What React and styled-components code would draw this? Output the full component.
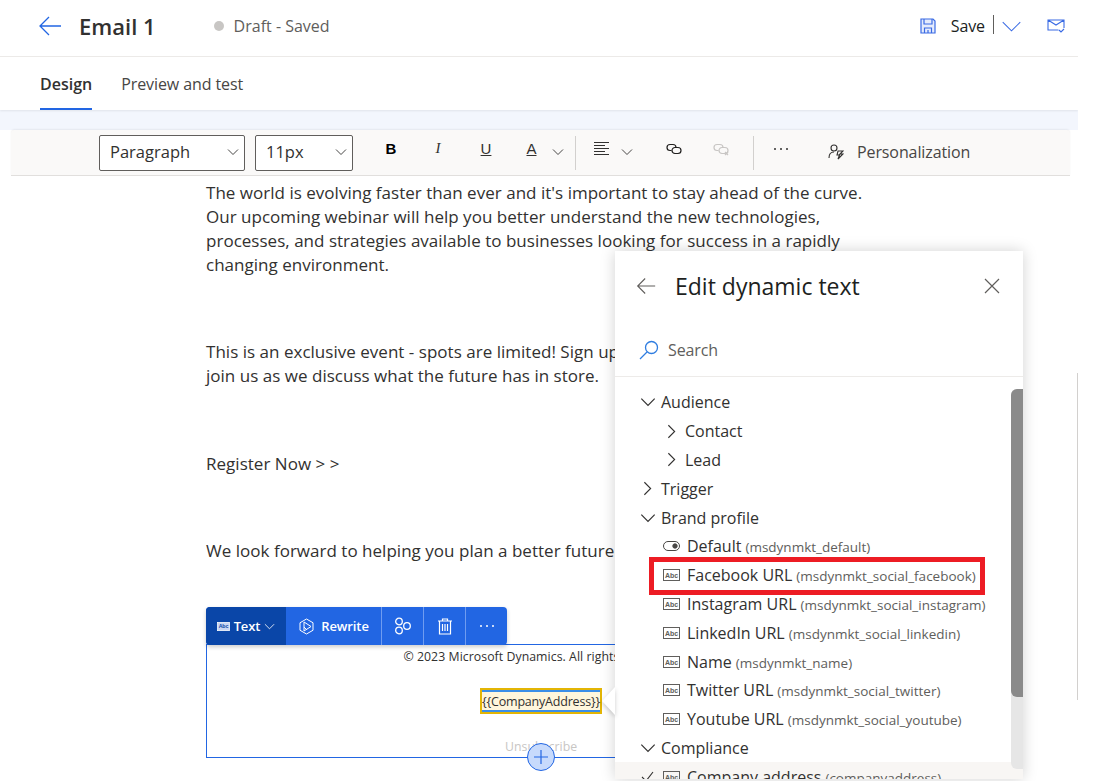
import styled, { createGlobalStyle } from 'styled-components'

const GlobalStyle = createGlobalStyle`
  html, body {
    margin: 0;
    height: 100%;
    overflow: hidden;
    background: #fff;
  }
  * {
    box-sizing: border-box;
  }
  #root {
    font-family: "Open Sans", "Noto Sans", "Liberation Sans", sans-serif;
    color: #323130;
  }
`

const Page = styled.div`
  width: 1078px;
  height: 781px;
  display: flex;
  flex-direction: column;
  position: relative;
  overflow: hidden;
`

const Header = styled.header`
  height: 57px;
  flex: none;
  display: flex;
  align-items: center;
  padding: 0 13px 4px 38px;
  border-bottom: 1px solid #edebe9;
`

const Title = styled.h1`
  margin: 0 0 0 17px;
  font-size: 22px;
  font-weight: 600;
  color: #323130;
`

const Status = styled.div`
  display: flex;
  align-items: center;
  margin-left: 58px;
  font-size: 16px;
  color: #605e5c;

  &::before {
    content: '';
    width: 10px;
    height: 10px;
    border-radius: 50%;
    background: #c8c6c4;
    margin-right: 10px;
  }
`

const HeaderActions = styled.div`
  margin-left: auto;
  display: flex;
  align-items: center;
`

const SaveLabel = styled.span`
  font-size: 16px;
  letter-spacing: -0.1px;
  color: #201f1e;
  margin-left: 15px;
  padding-right: 8px;
`

const Divider = styled.span`
  width: 1px;
  height: 19px;
  background: #605e5c;
  margin: 0 7px 4px 0;
`

const HeaderSpacer = styled.span`
  width: 25px;
`

const Tabs = styled.nav`
  height: 53px;
  flex: none;
  display: flex;
  gap: 29px;
  padding-left: 40px;
  box-shadow: 0 1px 2px rgba(0, 0, 0, 0.08);
  position: relative;
`

const Tab = styled.div`
  font-size: 16px;
  letter-spacing: ${({ $active }) => ($active ? '0' : '-0.1px')};
  line-height: 55px;
  height: 53px;
  color: ${({ $active }) => ($active ? '#323130' : '#484644')};
  font-weight: ${({ $active }) => ($active ? 600 : 400)};
  border-bottom: 2px solid ${({ $active }) => ($active ? '#2266e3' : 'transparent')};
`

const Canvas = styled.main`
  flex: 1;
  min-height: 0;
  background: linear-gradient(#f3f6fd 0, #f3f6fd 20px, #fff 20px);
  padding: 20px 8px 0 11px;
  display: flex;
  flex-direction: column;
`

const Editor = styled.div`
  flex: 1;
  background: #fff;
  display: flex;
  flex-direction: column;
`

const Toolbar = styled.div`
  height: 46px;
  flex: none;
  display: flex;
  align-items: center;
  background: #faf9f8;
  border-bottom: 1px solid #e1dfdd;
  border-radius: 4px 4px 0 0;
  box-shadow: 0 -1px 2px rgba(0, 0, 0, 0.06);
  padding-left: 88px;
`

const SelectBox = styled.div`
  width: ${({ $width }) => $width}px;
  height: 36px;
  margin-right: 10px;
  display: flex;
  align-items: center;
  justify-content: space-between;
  padding: 0 5px 2px 10px;
  background: #fff;
  border: 1px solid #605e5c;
  border-radius: 2px;
  font-size: 16.5px;
  color: #323130;
`

const ToolButton = styled.div`
  width: ${({ $width }) => $width || 47}px;
  height: 36px;
  display: flex;
  align-items: center;
  justify-content: center;
  gap: ${({ $gap }) => $gap || 0}px;
  padding-bottom: 8px;
  flex: none;
  color: ${({ $muted }) => ($muted ? '#c8c6c4' : '#323130')};
`

const ToolChevron = styled.span`
  display: flex;
  margin-top: 7px;
`

const Glyph = styled.span`
  font-size: 15px;
  font-weight: ${({ $bold }) => ($bold ? 700 : 400)};
  font-style: ${({ $italic }) => ($italic ? 'italic' : 'normal')};
  text-decoration: ${({ $under }) => ($under ? 'underline' : 'none')};
  font-family: ${({ $serif }) => ($serif ? '"Liberation Serif", serif' : '"Liberation Sans", sans-serif')};
  color: ${({ $bold }) => ($bold ? '#000' : '#323130')};
`

const ToolDivider = styled.span`
  width: 1px;
  height: 34px;
  background: #d2d0ce;
  flex: none;
  margin-left: ${({ $left }) => $left || 0}px;
`

const Personalize = styled.div`
  display: flex;
  align-items: center;
  gap: 13px;
  margin-left: 20px;
  padding-bottom: 2px;
  font-size: 16px;
  letter-spacing: -0.1px;
  color: #484644;
`

const Body = styled.div`
  flex: 1;
  width: 660px;
  margin-left: 195px;
  padding-top: 5px;
  font-size: 17px;
  line-height: 24px;
  letter-spacing: 0.02px;
  color: #323130;
`

const Para = styled.p`
  margin: 0 0 ${({ $after }) => $after}px;
`

const Block = styled.div`
  position: relative;
  width: 660px;
  height: 114px;
  margin-top: 81px;
  border: 1px solid #2266e3;
  padding: 3px 0 0 8px;
  font-size: 12.3px;
  line-height: 18px;
  text-align: center;
  letter-spacing: 0.05px;
`

const BlockBar = styled.div`
  position: absolute;
  left: -1px;
  top: -38px;
  height: 38px;
  display: flex;
  background: #2266e3;
  border-radius: 4px;
  box-shadow: 0 2px 4px rgba(0, 0, 0, 0.2);
  color: #fff;
  font-size: 13px;
  letter-spacing: -0.1px;
`

const BarItem = styled.div`
  display: flex;
  align-items: center;
  justify-content: center;
  gap: ${({ $gap }) => $gap || 0}px;
  width: ${({ $width }) => $width}px;
  background: ${({ $dark }) => ($dark ? '#0a46a8' : 'transparent')};
  border-left: ${({ $line }) => ($line ? '1px solid #6f9cf0' : 'none')};
  border-radius: ${({ $dark }) => ($dark ? '4px 0 0 4px' : '0')};
  font-weight: 600;
`

const DynamicToken = styled.div`
  position: absolute;
  left: 273px;
  top: 43px;
  width: 122px;
  height: 26px;
  background: #fff6dc;
  border: 1px solid #e3b505;
  box-shadow: inset 0 0 0 1px #e3b505, inset 0 3px 0 #3b8ee8, inset 0 -3px 0 #3b8ee8;
  font-size: 12.5px;
  line-height: 26px;
  letter-spacing: -0.2px;
  white-space: nowrap;
  text-align: center;
  color: #323130;
`

const Unsubscribe = styled.div`
  position: absolute;
  left: 298px;
  top: 93px;
  color: #c8c6c4;
  font-size: 12.3px;
`

const AddButton = styled.div`
  position: absolute;
  left: 320px;
  top: 98px;
  width: 28px;
  height: 28px;
  border-radius: 50%;
  background: #c7dafc;
  border: 1px solid #2266e3;
  display: flex;
  align-items: center;
  justify-content: center;
`

const Popover = styled.aside`
  position: absolute;
  left: 615px;
  top: 251px;
  width: 408px;
  height: 528px;
  background: #fff;
  box-shadow: 0 0 14px rgba(0, 0, 0, 0.18);
  display: flex;
  flex-direction: column;
`

const Beak = styled.div`
  position: absolute;
  left: -13px;
  top: 436px;
  width: 13px;
  height: 28px;
  filter: drop-shadow(0 2px 2px rgba(0, 0, 0, 0.2));

  &::before {
    content: '';
    display: block;
    width: 100%;
    height: 100%;
    background: #fff;
    clip-path: polygon(100% 0, 0 50%, 100% 100%);
  }
`

const PopHead = styled.div`
  height: 73px;
  flex: none;
  display: flex;
  align-items: center;
  padding: 0 23px 3px 21px;
`

const PopTitle = styled.h2`
  margin: 0 0 0 19px;
  font-size: 23px;
  font-weight: 400;
  color: #201f1e;
  flex: 1;
`

const SearchRow = styled.div`
  height: 53px;
  flex: none;
  display: flex;
  align-items: center;
  gap: 9px;
  padding: 0 0 0 24px;
  border-bottom: 1px solid #edebe9;
  font-size: 16px;
  letter-spacing: -0.1px;
  color: #605e5c;
`

const TreeWrap = styled.div`
  flex: 1;
  position: relative;
  padding-top: 11px;
  overflow: hidden;
`

const Row = styled.div`
  height: 28.8px;
  display: flex;
  align-items: center;
  gap: ${({ $gap }) => $gap}px;
  padding-left: ${({ $indent }) => $indent}px;
  font-size: 16px;
  color: #323130;
  white-space: nowrap;
  background: ${({ $selected }) => ($selected ? '#f8f6f4' : 'transparent')};
`

const RowIcon = styled.span`
  width: 17px;
  display: flex;
  justify-content: center;
  flex: none;
`

const Key = styled.span`
  font-size: 13.5px;
  color: #605e5c;
  margin-left: 4px;
`

const Highlight = styled.div`
  position: absolute;
  left: 34px;
  top: 180px;
  width: 336px;
  height: 38px;
  border: 5px solid #ed1c24;
`

const ScrollTrack = styled.div`
  position: absolute;
  right: 0;
  top: 12px;
  bottom: 10px;
  width: 12px;
  background: #e6e6e6;
  border-radius: 6px 0 0 6px;
`

const ScrollThumb = styled.div`
  width: 100%;
  height: 308px;
  background: #8a8a8a;
  border-radius: 6px 0 0 6px;
`

const EdgeLine = styled.div`
  position: absolute;
  right: 0;
  top: 373px;
  width: 1px;
  height: 327px;
  background: #d2d0ce;
`

const Arrow = ({ color = '#2266e3', size = 24 }) => (
  <svg width={size} height={size} viewBox="0 0 24 24" fill="none" stroke={color} strokeWidth="1.3">
    <path d="M2 12h21M11 3l-9 9 9 9" />
  </svg>
)

const Chevron = ({ dir = 'down', size = 12, color = '#323130', width = 0.9 }) => (
  <svg width={size} height={size} viewBox="0 0 12 12" fill="none" stroke={color} strokeWidth={width}>
    <path d={dir === 'down' ? 'M1 3.5l5 5 5-5' : 'M3.5 1l5 5-5 5'} />
  </svg>
)

const SaveIcon = () => (
  <svg width="16" height="16" viewBox="0 0 16 16" fill="#e6ecfc" stroke="#3a6be4" strokeWidth="1.2">
    <path d="M1 1h12l2 2v12H1z" />
    <path d="M4 1v5h8V1M4.5 15v-5h7v5M8 12v3" fill="none" />
  </svg>
)

const MailIcon = () => (
  <svg width="18" height="16" viewBox="0 0 18 16" fill="none" stroke="#3a6be4" strokeWidth="1.1">
    <path d="M11.5 12H1V2h16v8M1 2l8 5 8-5M12 12l2 2 3-3" />
  </svg>
)

const AlignIcon = () => (
  <svg width="15" height="13" viewBox="0 0 15 13" stroke="#323130" strokeWidth="1">
    <path d="M0 .5h15M0 3.5h11M0 6.5h15M0 9.5h11M0 12.5h15" />
  </svg>
)

const LinkIcon = ({ color = '#201f1e', broken }) => (
  <svg width="16" height="14" viewBox="0 0 16 14" fill="none" stroke={color} strokeWidth="1.2">
    <path d="M7 2.5H4a3 3 0 0 0 0 6h1.5" />
    <path d="M9 5.5h3a3 3 0 0 1 0 6H9a3 3 0 0 1-3-3 3 3 0 0 1 3-3z" />
    <path d="M7 2.5a3 3 0 0 1 3 3" />
    {broken && <path d="M12 10l3 3M15 10l-3 3" />}
  </svg>
)

const PersonIcon = () => (
  <svg width="16" height="16" viewBox="0 0 16 16" fill="none" stroke="#323130" strokeWidth="1.1">
    <circle cx="6" cy="4" r="3" />
    <path d="M1 14c0-4 2-6 5-6" />
    <path d="M10 7h5l-3 3h3l-5 5 1.5-4H9z" />
  </svg>
)

const SearchIcon = () => (
  <svg width="20" height="20" viewBox="0 0 20 20" fill="none" stroke="#2f7de0" strokeWidth="1.3">
    <circle cx="12.5" cy="7.5" r="6" />
    <path d="M8 12l-7 7" />
  </svg>
)

const CloseIcon = () => (
  <svg width="16" height="16" viewBox="0 0 16 16" stroke="#605e5c" strokeWidth="1.2">
    <path d="M1 1l14 14M15 1L1 15" />
  </svg>
)

const AbcLabel = styled.text`
  font-family: "Liberation Sans", sans-serif;
  font-size: 7px;
  font-weight: 700;
  text-anchor: middle;
  fill: ${({ $color }) => $color};
`

const AbcIcon = ({ width = 17, height = 12, color = '#605e5c', fill = 'none', text = '#605e5c' }) => (
  <svg width={width} height={height} viewBox="0 0 17 12">
    <rect x=".5" y=".5" width="16" height="11" fill={fill} stroke={color} />
    <AbcLabel x="8.5" y="8.5" $color={text}>Abc</AbcLabel>
  </svg>
)

const ToggleIcon = () => (
  <svg width="17" height="10" viewBox="0 0 17 10" fill="none" stroke="#484644">
    <rect x=".5" y=".5" width="16" height="9" rx="4.5" />
    <circle cx="12" cy="5" r="2.2" fill="#484644" />
  </svg>
)

const RewriteIcon = () => (
  <svg width="17" height="17" viewBox="0 0 17 17" fill="none" stroke="#fff">
    <path d="M8.5 1l6.5 3.75v7.5L8.5 16 2 12.25v-7.5z" />
    <path d="M6 4v9l7-4.5zM6 9l3 3" />
  </svg>
)

const ShapesIcon = () => (
  <svg width="18" height="18" viewBox="0 0 18 18" fill="none" stroke="#fff" strokeWidth="1.3">
    <circle cx="5" cy="4.5" r="3.3" />
    <circle cx="5" cy="13.5" r="3.3" />
    <circle cx="13" cy="9" r="3.3" />
  </svg>
)

const TrashIcon = () => (
  <svg width="14" height="17" viewBox="0 0 14 17" fill="none" stroke="#fff" strokeWidth="1.2">
    <path d="M0 3h14M4.5 3V1h5v2M1.5 3v13h11V3M4.5 6v7M7 6v7M9.5 6v7" />
  </svg>
)

const Dots = ({ color = '#fff' }) => (
  <svg width="16" height="4" viewBox="0 0 16 4" fill={color}>
    <circle cx="2" cy="2" r="1" />
    <circle cx="8" cy="2" r="1" />
    <circle cx="14" cy="2" r="1" />
  </svg>
)

const brandFields = [
  { name: 'Facebook URL', key: 'msdynmkt_social_facebook' },
  { name: 'Instagram URL', key: 'msdynmkt_social_instagram' },
  { name: 'LinkedIn URL', key: 'msdynmkt_social_linkedin' },
  { name: 'Name', key: 'msdynmkt_name' },
  { name: 'Twitter URL', key: 'msdynmkt_social_twitter' },
  { name: 'Youtube URL', key: 'msdynmkt_social_youtube' },
]

export default function App() {
  return (
    <Page>
      <GlobalStyle />
      <Header>
        <Arrow />
        <Title>Email 1</Title>
        <Status>Draft - Saved</Status>
        <HeaderActions>
          <SaveIcon />
          <SaveLabel>Save</SaveLabel>
          <Divider />
          <Chevron size={21} color="#3a6be4" width={0.6} />
          <HeaderSpacer />
          <MailIcon />
        </HeaderActions>
      </Header>
      <Tabs>
        <Tab $active>Design</Tab>
        <Tab>Preview and test</Tab>
      </Tabs>
      <Canvas>
        <Editor>
          <Toolbar>
            <SelectBox $width={146}>
              Paragraph <Chevron size={12} />
            </SelectBox>
            <SelectBox $width={98}>
              11px <Chevron size={12} />
            </SelectBox>
            <ToolButton $width={56}><Glyph $bold>B</Glyph></ToolButton>
            <ToolButton $width={38}><Glyph $italic $serif>I</Glyph></ToolButton>
            <ToolButton $width={58}><Glyph $under>U</Glyph></ToolButton>
            <ToolButton $width={60} $gap={15}>
              <Glyph $under>A</Glyph>
              <ToolChevron><Chevron size={12} /></ToolChevron>
            </ToolButton>
            <ToolDivider />
            <ToolButton $width={75} $gap={12}>
              <AlignIcon />
              <ToolChevron><Chevron size={12} /></ToolChevron>
            </ToolButton>
            <ToolButton $width={46}><LinkIcon /></ToolButton>
            <ToolButton $width={48}><LinkIcon color="#c8c6c4" broken /></ToolButton>
            <ToolDivider $left={8} />
            <ToolButton $width={54}><Dots color="#323130" /></ToolButton>
            <Personalize>
              <PersonIcon />
              Personalization
            </Personalize>
          </Toolbar>
          <Body>
            <Para $after={63}>
              The world is evolving faster than ever and it's important to stay ahead of the curve.
              <br />
              Our upcoming webinar will help you better understand the new technologies,
              <br />
              processes, and strategies available to businesses looking for success in a rapidly
              <br />
              changing environment.
            </Para>
            <Para $after={64}>
              This is an exclusive event - spots are limited! Sign up today and
              <br />
              join us as we discuss what the future has in store.
            </Para>
            <Para $after={63}>Register Now &gt; &gt;</Para>
            <Para $after={0}>We look forward to helping you plan a better future.</Para>
            <Block>
              <BlockBar>
                <BarItem $dark $width={80} $gap={4}>
                  <AbcIcon width={13} height={9} color="#fff" fill="#c9d6f2" text="#0a46a8" />
                  Text
                  <Chevron size={11} color="#fff" />
                </BarItem>
                <BarItem $width={95} $gap={6}>
                  <RewriteIcon />
                  Rewrite
                </BarItem>
                <BarItem $line $width={42}><ShapesIcon /></BarItem>
                <BarItem $line $width={42}><TrashIcon /></BarItem>
                <BarItem $line $width={42}><Dots /></BarItem>
              </BlockBar>
              © 2023 Microsoft Dynamics. All rights reserved.
              <DynamicToken>{'{{CompanyAddress}}'}</DynamicToken>
              <Unsubscribe>Unsubscribe</Unsubscribe>
              <AddButton>
                <svg width="16" height="16" viewBox="0 0 16 16" stroke="#2266e3" strokeWidth="1.2">
                  <path d="M8 1v14M1 8h14" />
                </svg>
              </AddButton>
            </Block>
          </Body>
        </Editor>
      </Canvas>
      <EdgeLine />
      <Popover>
        <Beak />
        <PopHead>
          <Arrow color="#605e5c" size={20} />
          <PopTitle>Edit dynamic text</PopTitle>
          <CloseIcon />
        </PopHead>
        <SearchRow>
          <SearchIcon />
          Search
        </SearchRow>
        <TreeWrap>
          <ScrollTrack>
            <ScrollThumb />
          </ScrollTrack>
          <Row $indent={24} $gap={5}><RowIcon><Chevron size={16} /></RowIcon>Audience</Row>
          <Row $indent={48} $gap={5}><RowIcon><Chevron dir="right" size={15} /></RowIcon>Contact</Row>
          <Row $indent={48} $gap={5}><RowIcon><Chevron dir="right" size={15} /></RowIcon>Lead</Row>
          <Row $indent={24} $gap={5}><RowIcon><Chevron dir="right" size={15} /></RowIcon>Trigger</Row>
          <Row $indent={24} $gap={5}><RowIcon><Chevron size={16} /></RowIcon>Brand profile</Row>
          <Row $indent={48} $gap={7}>
            <RowIcon><ToggleIcon /></RowIcon>
            <span>Default<Key>(msdynmkt_default)</Key></span>
          </Row>
          {brandFields.map(field => (
            <Row key={field.key} $indent={48} $gap={7}>
              <RowIcon><AbcIcon /></RowIcon>
              <span>{field.name}<Key>({field.key})</Key></span>
            </Row>
          ))}
          <Row $indent={24} $gap={5}><RowIcon><Chevron size={16} /></RowIcon>Compliance</Row>
          <Row $indent={24} $gap={7} $selected>
            <RowIcon>
              <svg width="13" height="13" viewBox="0 0 13 13" fill="none" stroke="#323130" strokeWidth="1.1">
                <path d="M1 7l4 4 7-9" />
              </svg>
            </RowIcon>
            <AbcIcon />
            <span>Company address<Key>(companyaddress)</Key></span>
          </Row>
          <Highlight />
        </TreeWrap>
      </Popover>
    </Page>
  )
}
